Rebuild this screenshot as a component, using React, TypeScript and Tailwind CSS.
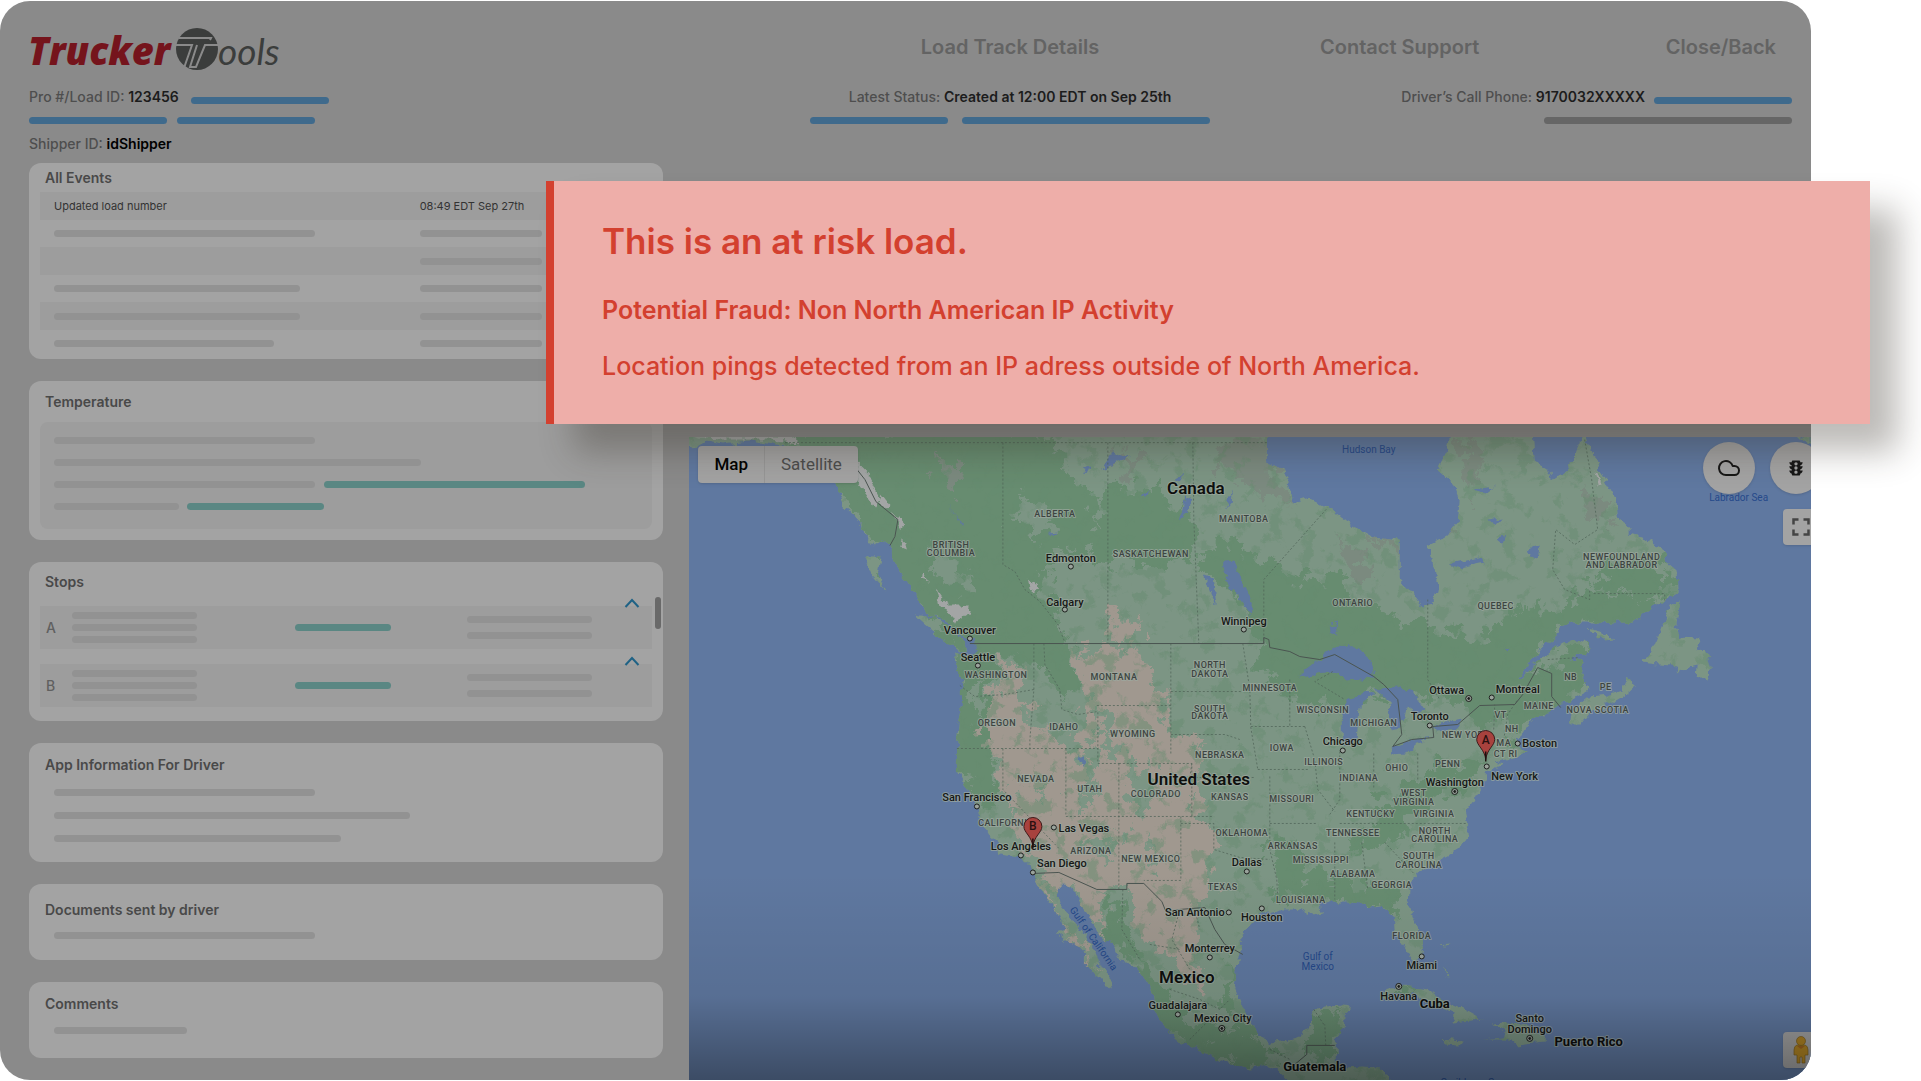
import React from "react";
import { Cloud } from "lucide-react";
import { MdTraffic, MdFullscreen } from "react-icons/md";

const SKELETON = "h-[7px] rounded-full bg-[#929292]";
const TEAL = "h-[7px] rounded-full bg-[#5a8783]";
const BLUE = "h-[7px] rounded-full bg-[#3f6a8c]";

function Logo() {
  return (
    <svg viewBox="0 -8 264 60" className="-mt-2 h-15 w-66" role="img" aria-label="Trucker Tools">
      <text x="-1" y="38" fontFamily="Open Sans" fontWeight="800" fontStyle="italic" fontSize="38" fill="#75141c">
        Trucker
      </text>
      <circle cx="168" cy="22" r="21" fill="#3b3d3c" />
      <g fill="none" stroke="#8a8a8a" strokeWidth="2">
        <path d="M150 11H182L181 13" />
        <path d="M147 18H163L155 41" />
        <path d="M190 18H176L167 40H161L168 18" />
      </g>
      <text x="189" y="38" fontFamily="Lato" fontWeight="400" fontStyle="italic" fontSize="37" fill="#3b3d3c">
        ools
      </text>
    </svg>
  );
}

function Field({ label, value, dark }: { label: string; value: string; dark?: boolean }) {
  return (
    <p className="whitespace-nowrap text-sm leading-5 font-medium text-[#4e4e4e]">
      {label} <span className={dark ? "font-semibold text-black" : "font-semibold text-[#1c1c1c]"}>{value}</span>
    </p>
  );
}

function Header() {
  return (
    <header className="grid grid-cols-[780fr_402fr_581fr] pt-[26px] pr-[19px] pl-[29px]">
      <a href="#home" className="block h-11">
        <Logo />
      </a>
      <a href="#details" className="pt-2 text-center text-xl leading-6 font-semibold text-[#636363]">
        Load Track Details
      </a>
      <nav className="flex justify-between pt-2 pr-4 pl-[109px] text-xl leading-6 font-semibold text-[#636363]">
        <a href="#support">Contact Support</a>
        <a href="#back">Close/Back</a>
      </nav>

      <div className="mt-4">
        <div className="flex items-center gap-3">
          <Field label="Pro #/Load ID:" value="123456" />
          <div className={`${BLUE} mt-1.5 w-[138px]`} />
        </div>
        <div className="mt-2.5 flex gap-2.5">
          <div className={`${BLUE} w-[138px]`} />
          <div className={`${BLUE} w-[138px]`} />
        </div>
        <div className="mt-2.5">
          <Field label="Shipper ID:" value="idShipper" dark />
        </div>
      </div>
      <div className="mt-4 flex flex-col items-center">
        <Field label="Latest Status:" value="Created at 12:00 EDT on Sep 25th" />
        <div className="mt-2.5 flex gap-3.5">
          <div className={`${BLUE} w-[138px]`} />
          <div className={`${BLUE} w-[248px]`} />
        </div>
      </div>
      <div className="mt-4 flex flex-col items-end">
        <div className="flex items-center gap-[9px]">
          <Field label="Driver’s Call Phone:" value="9170032XXXXX" />
          <div className={`${BLUE} mt-1.5 w-[138px]`} />
        </div>
        <div className="mt-2.5 h-[7px] w-[248px] rounded-full bg-[#666666]" />
      </div>
    </header>
  );
}

function Card({ title, className, children }: { title: string; className: string; children: React.ReactNode }) {
  return (
    <section className={`relative rounded-xl bg-[#a3a3a3] px-[11px] ${className}`}>
      <h2 className="pl-[5px] text-sm leading-5 font-semibold text-[#494949]">{title}</h2>
      {children}
    </section>
  );
}

const eventRows = [
  { left: "w-[261px]", odd: false },
  { left: "", odd: true },
  { left: "w-[246px]", odd: false },
  { left: "w-[246px]", odd: true },
  { left: "w-[220px]", odd: false },
];

function EventsTable() {
  return (
    <table className="mt-1 w-full table-fixed border-collapse text-left text-[11px] text-[#333333]">
      <tbody>
        <tr className="h-7 bg-[#9d9d9d]">
          <td className="w-[62%] pl-3.5">Updated load number</td>
          <td>08:49 EDT Sep 27th</td>
        </tr>
        {eventRows.map((row, i) => (
          <tr key={i} className={row.odd ? "h-7 bg-[#9d9d9d]" : "h-[27px]"}>
            <td className="pl-3.5">{row.left && <div className={`${SKELETON} ${row.left}`} />}</td>
            <td>
              <div className={`${SKELETON} w-[122px]`} />
            </td>
          </tr>
        ))}
      </tbody>
    </table>
  );
}

function Stop({ letter }: { letter: string }) {
  return (
    <div className="relative flex h-[43px] items-center bg-[#9d9d9d] pl-1.5">
      <span className="w-[26px] text-sm leading-5 font-medium text-[#606060]">{letter}</span>
      <div className="flex w-[36.8%] flex-col gap-[5px]">
        <div className={`${SKELETON} w-[125px]`} />
        <div className={`${SKELETON} w-[125px]`} />
        <div className={`${SKELETON} w-[125px]`} />
      </div>
      <div className="w-[28.4%]">
        <div className={`${TEAL} w-[96px]`} />
      </div>
      <div className="flex flex-col gap-[9px]">
        <div className={`${SKELETON} w-[125px]`} />
        <div className={`${SKELETON} w-[125px]`} />
      </div>
      <button type="button" aria-label={`Collapse stop ${letter}`} className="absolute -top-2 right-3">
        <svg viewBox="0 0 16 11" className="block h-[11px] w-4" fill="none" stroke="#1f6285" strokeWidth="2">
          <path d="M1.5 9 8 2 14.5 9" />
        </svg>
      </button>
    </div>
  );
}

function Sidebar() {
  return (
    <div className="flex w-[35.6%] flex-col gap-[22px] pb-[22px]">
      <Card title="All Events" className="h-[196px] pt-[5px]">
        <EventsTable />
      </Card>
      <Card title="Temperature" className="h-[159px] pt-[11px]">
        <div className="mt-2.5 flex h-[107px] flex-col gap-[15px] rounded-lg bg-[#9d9d9d] pt-[15px] pl-3.5">
          <div className={`${SKELETON} w-[261px]`} />
          <div className={`${SKELETON} w-[367px]`} />
          <div className="flex gap-[9px]">
            <div className={`${SKELETON} w-[261px]`} />
            <div className={`${TEAL} w-[261px]`} />
          </div>
          <div className="flex gap-2">
            <div className={`${SKELETON} w-[125px]`} />
            <div className={`${TEAL} w-[137px]`} />
          </div>
        </div>
      </Card>
      <Card title="Stops" className="h-[159px] pt-2.5">
        <div className="mt-3.5 flex flex-col gap-[15px]">
          <Stop letter="A" />
          <Stop letter="B" />
        </div>
        <div className="absolute top-[35px] right-0.5 h-8 w-1.5 rounded-full bg-[#696969]" />
      </Card>
      <Card title="App Information For Driver" className="h-[119px] pt-3">
        <div className="mt-3.5 flex flex-col gap-4 pl-3.5">
          <div className={`${SKELETON} w-[261px]`} />
          <div className={`${SKELETON} w-[356px]`} />
          <div className={`${SKELETON} w-[287px]`} />
        </div>
      </Card>
      <Card title="Documents sent by driver" className="h-[76px] pt-4">
        <div className={`${SKELETON} mt-3 ml-3.5 w-[261px]`} />
      </Card>
      <Card title="Comments" className="h-[76px] pt-3">
        <div className={`${SKELETON} mt-[13px] ml-3.5 w-[133px]`} />
      </Card>
    </div>
  );
}

type Label = [string, number, number];

const states: Label[] = [
  ["ALBERTA", 1055, 514], ["BRITISH", 951, 545], ["COLUMBIA", 951, 553], ["WASHINGTON", 996, 675],
  ["OREGON", 997, 724], ["IDAHO", 1064, 728], ["MONTANA", 1114, 677], ["MANITOBA", 1244, 519],
  ["SASKATCHEWAN", 1151, 554], ["ONTARIO", 1353, 603], ["NORTH", 1210, 665], ["DAKOTA", 1210, 674],
  ["SOUTH", 1210, 709], ["DAKOTA", 1210, 717], ["MINNESOTA", 1270, 688], ["WISCONSIN", 1323, 710],
  ["MICHIGAN", 1374, 724], ["NEW YORK", 1466, 736], ["WYOMING", 1133, 735], ["IOWA", 1282, 749],
  ["QUEBEC", 1496, 606], ["NEWFOUNDLAND", 1622, 557], ["AND LABRADOR", 1622, 565], ["NB", 1571, 677],
  ["PE", 1606, 687], ["MAINE", 1539, 706], ["NOVA SCOTIA", 1598, 710], ["VT", 1501, 715],
  ["NH", 1512, 730], ["MA", 1504, 744], ["NEVADA", 1036, 780], ["UTAH", 1090, 790],
  ["NEBRASKA", 1220, 756], ["COLORADO", 1156, 795], ["KANSAS", 1230, 798], ["MISSOURI", 1292, 800],
  ["CALIFORNIA", 1006, 824], ["ARIZONA", 1091, 852], ["NEW MEXICO", 1151, 860], ["OKLAHOMA", 1242, 834],
  ["ARKANSAS", 1293, 847], ["TEXAS", 1223, 888], ["LOUISIANA", 1301, 901], ["ILLINOIS", 1324, 763],
  ["OHIO", 1397, 769], ["INDIANA", 1359, 779], ["PENN", 1448, 765], ["CT RI", 1506, 755],
  ["WEST", 1414, 794], ["VIRGINIA", 1414, 803], ["KENTUCKY", 1371, 815], ["VIRGINIA", 1434, 815],
  ["TENNESSEE", 1353, 834], ["NORTH", 1435, 832], ["CAROLINA", 1435, 840], ["SOUTH", 1419, 857],
  ["CAROLINA", 1419, 866], ["MISSISSIPPI", 1321, 861], ["ALABAMA", 1353, 875], ["GEORGIA", 1392, 886],
  ["FLORIDA", 1412, 937],
];

const cities: Label[] = [
  ["Edmonton", 1071, 558], ["Calgary", 1065, 602], ["Vancouver", 970, 630], ["Seattle", 978, 657],
  ["Winnipeg", 1244, 621], ["Ottawa", 1447, 690], ["Toronto", 1430, 717], ["Chicago", 1343, 742],
  ["Montreal", 1518, 689], ["Boston", 1540, 744], ["San Francisco", 977, 798], ["Las Vegas", 1084, 829],
  ["Los Angeles", 1021, 847], ["San Diego", 1062, 864], ["Dallas", 1247, 863], ["San Antonio", 1195, 913],
  ["Houston", 1262, 918], ["Monterrey", 1210, 949], ["Guadalajara", 1178, 1006], ["Mexico City", 1223, 1019],
  ["New York", 1515, 777], ["Washington", 1455, 783], ["Miami", 1422, 966], ["Havana", 1399, 997],
  ["Santo", 1530, 1019], ["Domingo", 1530, 1030],
];

const water: Label[] = [
  ["Hudson Bay", 1369, 449], ["Labrador Sea", 1739, 497], ["Gulf of", 1318, 957], ["Mexico", 1318, 967],
  ["Caribbean Sea", 1473, 1083],
];

const dots = [
  [1071, 567], [1065, 610], [970, 639], [978, 666], [1244, 630], [1430, 726], [1343, 751], [1492, 698],
  [1518, 744], [977, 807], [1054, 828], [1021, 856], [1033, 873], [1247, 872], [1229, 913], [1262, 909],
  [1210, 958], [1178, 1015], [1487, 767], [1422, 957],
];

const capitals = [[1469, 699], [1222, 1029], [1455, 792], [1399, 987], [1530, 1039]];

const mainland =
  "M689 430V447L700 446 706 441 722 444 750 441 778 446 800 448 835 484 846 508 858 520 866 536 874 546 886 540 893 550 893 557 897 570 908 583 918 597 925 610 933 617 947 623 957 633 970 640 976 650 968 656 953 653 957 667 962 683 962 707 958 730 957 757 957 770 963 782 972 797 978 810 980 818 990 837 997 843 998 853 1018 857 1027 863 1034 873 1040 887 1047 900 1057 913 1065 930 1056 933 1067 942 1075 943 1085 953 1085 968 1100 977 1110 989 1113 985 1107 972 1100 967 1093 947 1083 933 1073 920 1060 905 1057 887 1067 887 1075 892 1082 907 1093 923 1102 940 1113 943 1117 957 1133 967 1143 977 1153 993 1155 1010 1163 1027 1180 1043 1200 1050 1223 1062 1250 1070 1263 1065 1277 1070 1297 1090H1392L1388 1075 1380 1068 1363 1067 1345 1068 1337 1062 1337 1040 1344 1027 1345 1012 1352 1006 1342 1005 1325 1007 1314 1012 1309 1030 1297 1038 1280 1042 1273 1043 1260 1037 1250 1023 1240 1000 1235 987 1238 960 1243 953 1240 937 1250 927 1263 913 1277 910 1297 910 1311 915 1325 913 1318 907 1335 902 1356 902 1370 908 1382 907 1394 917 1395 933 1406 950 1414 962 1421 958 1423 947 1418 930 1413 917 1408 900 1409 887 1418 873 1433 867 1445 857 1461 847 1469 835 1468 820 1466 812 1475 800 1480 790 1487 780 1487 772 1504 765 1495 763 1521 757 1528 753 1521 750 1518 740 1522 733 1530 723 1547 713 1562 703 1573 700 1590 690 1583 677 1582 663 1572 658 1590 652 1589 644 1577 640 1557 647 1540 660 1523 677 1518 678 1533 660 1543 647 1557 637 1562 627 1573 623 1600 623 1633 623 1647 612 1663 603 1679 593 1678 573 1667 563 1662 548 1647 540 1630 535 1630 527 1618 518 1617 500 1607 483 1597 463 1590 448 1585 430 1578 453 1568 470 1553 480 1547 470 1535 462 1533 430H1450L1447 453 1438 470 1453 483 1460 500 1458 523 1447 537 1428 547 1433 563 1437 590 1433 605 1423 607 1410 590 1400 578 1400 540 1373 537 1347 522 1328 507 1310 498 1293 503 1290 487 1283 470 1268 463 1268 430Z";

const islands =
  "M914 615 933 618 947 626 963 640 967 650 960 652 943 640 927 627ZM865 557 880 557 877 570 886 592 873 577ZM1570 725 1580 725 1590 713 1613 703 1623 697 1635 687 1628 676 1623 690 1608 695 1590 697 1572 713ZM1588 629 1600 632 1616 640 1603 641ZM1680 602 1670 607 1663 627 1655 647 1642 663 1660 665 1680 667 1677 675 1690 667 1698 665 1697 677 1708 680 1711 667 1707 653 1696 650 1702 638 1680 637 1675 628ZM1378 1000 1387 988 1411 987 1428 990 1445 1002 1469 1012 1483 1020 1452 1023 1456 1015 1430 1003 1410 994 1394 995ZM1493 1025 1521 1023 1545 1037 1545 1042 1518 1045 1512 1040 1483 1040 1504 1038 1506 1031ZM1442 1040 1462 1042 1459 1046 1448 1045ZM1442 967 1450 978 1446 977ZM1437 946 1450 945 1447 947ZM840 488 848 510 844 508ZM856 500 862 516 855 512ZM864 520 872 536 866 534ZM1796 437 1812 445V437Z";

const darkGreen =
  "M820 425H1010L1050 440 1070 480 1095 500 1090 520 1120 535 1160 530 1190 545 1170 570 1120 562 1070 548 1040 570 1050 600 1068 640 1080 690 1060 700 1040 660 1000 660 990 690 988 740 1000 790 990 800 975 800 950 760 950 640 900 590 850 510 790 440ZM1110 480 1180 500 1200 540 1180 560 1140 545 1100 540ZM1190 560 1230 540 1260 560 1300 580 1340 575 1352 600 1380 610 1430 630 1470 640 1500 625 1530 610 1560 610 1590 590 1640 600 1680 600 1640 625 1560 630 1530 680 1590 640 1590 690 1540 720 1520 740 1500 720 1480 730 1460 700 1420 700 1370 700 1300 710 1262 680 1260 640 1230 590ZM1590 580 1620 560 1660 560 1680 590 1640 600ZM1400 790 1430 770 1480 760 1470 790 1430 800 1390 845 1350 850 1360 830ZM1270 840 1300 840 1310 870 1400 890 1400 920 1340 905 1300 890 1285 910 1272 880ZM1110 893 1125 920 1140 960 1180 1010 1230 1030 1290 1060 1240 1070 1160 1030 1140 970 1105 930ZM1230 960 1235 1010 1260 1040 1240 1040 1220 1000ZM1310 1020 1345 1010 1337 1060 1310 1060ZM1400 1000 1420 990 1400 985Z";

const desert =
  "M1075 652 1143 648 1150 670 1166 700 1172 735 1205 748 1198 790 1208 800 1190 820 1218 835 1212 870 1206 895 1198 925 1192 955 1205 990 1190 990 1170 960 1150 945 1140 925 1125 890 1105 885 1100 920 1110 940 1093 925 1075 890 1045 885 1060 920 1100 980 1070 945 1040 885 1035 860 1010 830 1000 790 1002 760 985 740 990 705 1002 690 1000 665 1012 660 1024 680 1026 715 1060 745 1070 735 1085 725 1090 700 1078 680ZM1108 608 1125 614 1145 632 1130 638 1105 635Z";

const paleGreen =
  "M1050 740 1075 735 1085 745 1068 752ZM1098 700 1110 715 1105 740 1125 750 1112 755 1098 735ZM1122 760 1150 765 1160 790 1150 810 1128 808 1132 785ZM1082 750 1100 745 1096 790 1082 815 1076 805 1088 785ZM1008 790 1016 820 1010 830ZM1080 840 1110 848 1118 860 1095 856ZM1118 820 1130 830 1128 850ZM1150 830 1156 860 1148 870ZM1040 780 1044 790 1040 800ZM1150 680 1165 690 1150 695ZM935 540 960 560 975 590 950 590 930 570ZM1030 500 1060 520 1040 540 1010 520ZM975 660 982 690 975 730 970 700Z";

const tundra =
  "M1215 440 1268 440 1280 490 1290 505 1250 490 1220 470ZM940 455 960 475 955 490 938 478ZM1110 450 1150 460 1130 480ZM1340 540 1370 550 1360 590 1345 565ZM1590 480 1612 510 1605 525 1588 510ZM1440 540 1438 520 1462 530ZM1460 440 1480 455 1475 500 1465 480ZM1370 535 1400 545 1398 560Z";

const ice =
  "M848 455 868 475 880 500 876 508 860 485 846 462ZM880 493 890 505 886 510 880 503ZM893 512 905 525 900 528ZM935 590 942 600 950 606 970 606 968 615 955 622 948 610 938 605ZM922 572 928 582 921 580ZM695 436 790 436 800 444 770 440 720 440ZM903 540 906 550 901 548ZM1028 578 1040 590 1030 592ZM1595 470 1602 484 1598 485Z";

const lakes =
  "M1297 678 1313 665 1335 647 1357 648 1370 660 1375 678 1347 680 1333 672 1318 674ZM1342 740 1342 720 1348 700 1370 690 1373 693 1360 707 1357 737 1347 748ZM1375 690 1397 687 1413 693 1425 710 1420 715 1408 707 1405 720 1395 732 1388 720 1390 703ZM1390 754 1392 749 1413 740 1433 737 1418 743 1407 753ZM1435 725 1463 720 1460 728 1437 732ZM1223 563 1235 562 1243 583 1252 603 1250 617 1240 600 1227 583ZM1205 577 1213 580 1217 607 1211 595ZM1100 470 1113 452 1132 457 1112 466ZM1180 520 1186 495 1192 498 1186 514ZM1140 498 1150 490 1146 499ZM1175 480 1184 474 1182 482ZM1082 470 1090 468 1086 476ZM1330 625 1337 624 1338 638 1331 634ZM1077 755 1084 758 1085 767 1079 762ZM1528 550 1540 545 1538 560 1530 556ZM1450 565 1480 558 1485 563 1462 568ZM1475 490 1495 487 1485 495ZM1490 520 1502 518 1494 526ZM1225 510 1233 490 1232 502ZM948 505 966 527 962 524ZM1048 533 1058 532 1054 536ZM965 640 975 636 976 652 970 650ZM1497 540 1505 536 1502 544ZM1503 648 1512 650 1508 653Z";

const stateLines =
  "M785 443H1268M1003 443V565L1015 572 1025 590 1040 602 1058 625 1065 643M1108 443V644M1193 443 1194 520 1199 644M1264 644V580L1328 508M1044 644 1045 665 1060 690 1062 710 1078 715 1098 712V750M1034 644V690L1030 740V750M960 686 975 697 1005 695 1034 690M957 749H1098V764H1119M1003 749V790L1060 850M1066 749V817H1213M1119 764V890M1097 706H1171M1171 644V756M1171 692H1243M1171 735 1225 735 1240 740M1243 644 1250 690 1251 728 1258 770M1251 727H1305M1119 764H1192V817M1192 764 1190 778H1255M1181 817V881H1144M1181 824H1214V850L1240 858 1270 860M1258 770 1310 770M1270 777 1270 850 1277 880 1278 900M1270 824H1317M1340 752V800L1330 815M1374 754V790M1418 754V780M1340 824H1466M1335 843V900M1362 843 1368 890M1385 843 1415 875M1305 727 1315 760 1318 790 1335 812M1290 680V727M1333 672 1315 682 1345 700M1428 600V680L1440 700M1585 440 1592 480 1598 530 1575 545 1556 530 1553 570 1565 590 1590 600 1590 590M1594 594H1665V603M1494 730 1495 705M1504 740 1508 715 1518 700M1548 660 1580 658M1123 890 1122 930 1140 960M1180 910 1172 940 1190 970M1195 910 1200 930M1150 945 1180 950M1170 990 1200 1000 1220 1010 1230 1000M1190 1040 1210 1020M1270 1050 1290 1060M1324 1025 1314 1010M1326 1046 1325 1025";

const countryLines =
  "M970 644H1264V638L1269 640 1270 648 1290 652 1300 657 1320 660 1335 655 1374 677 1384 685 1398 700 1402 735 1393 747 1412 740 1434 738 1433 727 1458 725 1480 706 1515 705 1523 695 1538 668 1552 674V697L1561 708M1033 874 1059 873 1097 890H1127V884H1144L1162 902 1166 912M1166 912 1180 910 1205 908 1215 930 1225 945 1243 955M1307 1055V1046H1335M1307 1055 1295 1065M854 466 865 480 876 502 898 520 895 537 890 546";

function Pin({ x, y, letter }: { x: number; y: number; letter: string }) {
  return (
    <g transform={`translate(${x} ${y})`}>
      <path d="M0 20C-1 10-9 6-9 0A9 9 0 0 1 9 0C9 6 1 10 0 20Z" fill="#a8423e" stroke="#3c1a1a" strokeWidth="1" />
      <path d="M0 12V22" stroke="#1c1010" strokeWidth="1.5" />
      <text y="4" textAnchor="middle" fontSize="12" fontWeight="500" fill="#2a1010">
        {letter}
      </text>
    </g>
  );
}

function MapDrawing() {
  return (
    <svg
      viewBox="689 437 1122 644"
      preserveAspectRatio="xMidYMid slice"
      className="absolute inset-0 h-full w-full"
      fontFamily="Roboto"
      role="img"
      aria-label="Map of North America"
    >
      <defs>
        <filter id="coast" x="0" y="0" width="100%" height="100%" colorInterpolationFilters="sRGB">
          <feTurbulence type="fractalNoise" baseFrequency="0.12" numOctaves="3" seed="4" />
          <feDisplacementMap in="SourceGraphic" scale="9" xChannelSelector="R" yChannelSelector="G" />
        </filter>
        <filter id="terrain" x="-5%" y="-5%" width="110%" height="110%" colorInterpolationFilters="sRGB">
          <feTurbulence type="fractalNoise" baseFrequency="0.06" numOctaves="4" seed="9" />
          <feDisplacementMap in="SourceGraphic" scale="42" xChannelSelector="R" yChannelSelector="G" />
        </filter>
        <filter id="speckle" x="0" y="0" width="100%" height="100%" colorInterpolationFilters="sRGB">
          <feTurbulence type="fractalNoise" baseFrequency="0.06" numOctaves="4" seed="21" />
          <feColorMatrix values="0 0 0 0 0.404  0 0 0 0 0.549  0 0 0 0 0.439  9 0 0 0 -5" />
        </filter>
        <clipPath id="land">
          <path d={mainland} />
          <path d={islands} />
        </clipPath>
      </defs>
      <rect x="689" y="437" width="1122" height="644" fill="#5f78a0" />
      <g filter="url(#coast)">
        <rect x="689" y="430" width="1122" height="660" fill="none" />
        <g clipPath="url(#land)">
          <rect x="689" y="430" width="1122" height="660" fill="#7c9584" />
          <path d={darkGreen} fill="#678c70" filter="url(#terrain)" />
          <path d={desert} fill="#a0988f" filter="url(#terrain)" />
          <path d={paleGreen} fill="#7c9584" filter="url(#terrain)" />
          <path d={tundra} fill="#7b8a7f" filter="url(#terrain)" />
          <rect x="689" y="430" width="1122" height="660" filter="url(#speckle)" opacity="0.5" />
          <path d={ice} fill="#a3a5a5" />
        </g>
        <path d={lakes} fill="#5f78a0" />
      </g>
      <path d={stateLines} fill="none" stroke="#4f6357" strokeWidth="1" strokeDasharray="2 2" opacity="0.75" />
      <path d={countryLines} fill="none" stroke="#4a5450" strokeWidth="1" />

      <g textAnchor="middle" stroke="#9eaaa1" strokeOpacity="0.7" strokeLinejoin="round" className="[paint-order:stroke]">
        <g fontSize="9" fontWeight="500" fill="#3d4441" strokeWidth="2" className="tracking-wider">
          {states.map(([name, x, y], i) => (
            <text key={i} x={x} y={y + 3}>
              {name}
            </text>
          ))}
        </g>
        <g fontSize="11" fontWeight="500" fill="#161816" strokeWidth="2">
          {cities.map(([name, x, y]) => (
            <text key={name} x={x} y={y + 4}>
              {name}
            </text>
          ))}
        </g>
        <g fontSize="17" fontWeight="600" fill="#0e0f0e" strokeWidth="2">
          <text x="1196" y="494">Canada</text>
          <text x="1199" y="786">United States</text>
          <text x="1187" y="984">Mexico</text>
        </g>
        <g fontSize="13" fontWeight="700" fill="#0e0f0e" strokeWidth="2">
          <text x="1435" y="1009">Cuba</text>
          <text x="1589" y="1047">Puerto Rico</text>
          <text x="1315" y="1072">Guatemala</text>
        </g>
      </g>
      <g textAnchor="middle" fontSize="10" fill="#25498a">
        {water.map(([name, x, y]) => (
          <text key={name} x={x} y={y + 4}>
            {name}
          </text>
        ))}
        <text transform="translate(1091 941) rotate(55)">Gulf of California</text>
      </g>
      <g fill="#9aa39c" stroke="#1d1f1d" strokeWidth="1">
        {dots.map(([x, y]) => (
          <circle key={`${x}-${y}`} cx={x} cy={y} r="2.5" />
        ))}
        {capitals.map(([x, y]) => (
          <g key={`${x}-${y}`}>
            <circle cx={x} cy={y} r="3" />
            <circle cx={x} cy={y} r="1" fill="#1d1f1d" />
          </g>
        ))}
      </g>
      <Pin x={1486} y={740} letter="A" />
      <Pin x={1033} y={827} letter="B" />
    </svg>
  );
}

function MapPanel() {
  return (
    <section className="relative mt-[274px] ml-[26px] flex-1 overflow-hidden bg-[#5f78a0]">
      <MapDrawing />
      <div className="absolute top-[9px] left-[9px] flex h-[37px] rounded-sm bg-[#a3a3a3] font-[Roboto] text-[17px] shadow">
        <button type="button" className="border-r border-[#969696] px-4 font-medium text-black">
          Map
        </button>
        <button type="button" className="px-4 text-[#4c4c4c]">
          Satellite
        </button>
      </div>
      <div className="absolute top-[5px] -right-[11px] flex gap-[15px]">
        <button type="button" aria-label="Weather" className="flex size-[52px] items-center justify-center rounded-full bg-[#a3a3a3] shadow">
          <Cloud className="size-6 text-[#161616]" strokeWidth={2} />
        </button>
        <button type="button" aria-label="Traffic" className="flex size-[52px] items-center justify-center rounded-full bg-[#a3a3a3] shadow">
          <MdTraffic className="size-5 text-[#161616]" />
        </button>
      </div>
      <button type="button" aria-label="Full screen" className="absolute top-[72px] -right-2 flex size-9 items-center justify-center rounded-sm bg-[#a3a3a3] shadow">
        <MdFullscreen className="size-[30px] text-[#444444]" />
      </button>
      <button type="button" aria-label="Street view" className="absolute -right-2 bottom-3 flex size-9 items-center justify-center rounded-sm bg-[#a3a3a3] shadow">
        <svg viewBox="0 0 16 28" className="h-7 w-4" fill="#b08423" stroke="#7c6020" strokeWidth="0.7">
          <path d="M4 9H12Q15 10 15 14V19H12V27H9V21H7V27H4V19H1V14Q1 10 4 9Z" />
          <circle cx="8" cy="5" r="4.5" />
          <path d="M4 10 8 13 12 10Z" fill="#a06420" stroke="none" />
        </svg>
      </button>
      <div className="pointer-events-none absolute inset-x-0 bottom-0 h-52 bg-linear-to-b from-transparent via-black/8 via-60% to-black/37" />
    </section>
  );
}

function RiskAlert() {
  return (
    <div
      role="alert"
      className="absolute top-[181px] right-[51px] left-[546px] border-l-8 border-[#d3402f] bg-[#eeaea9] px-12 pt-[38px] pb-[42px] text-[#d3402f] shadow-[28px_28px_32px_rgba(50,45,35,0.32)]"
    >
      <h1 className="text-[35px] leading-[44px] font-semibold">This is an at risk load.</h1>
      <p className="mt-[31px] text-[25px] leading-8 font-semibold">Potential Fraud: Non North American IP Activity</p>
      <p className="mt-6 text-[25px] leading-8 font-medium">
        Location pings detected from an IP adress outside of North America.
      </p>
    </div>
  );
}

export default function App() {
  return (
    <div className="relative min-h-screen overflow-hidden bg-white pt-px font-[Inter,sans-serif]">
      <main className="mr-[110px] overflow-hidden rounded-[30px] bg-[#8a8a8a]">
        <Header />
        <div className="mt-[9px] flex pl-[29px]">
          <Sidebar />
          <MapPanel />
        </div>
      </main>
      <RiskAlert />
    </div>
  );
}
